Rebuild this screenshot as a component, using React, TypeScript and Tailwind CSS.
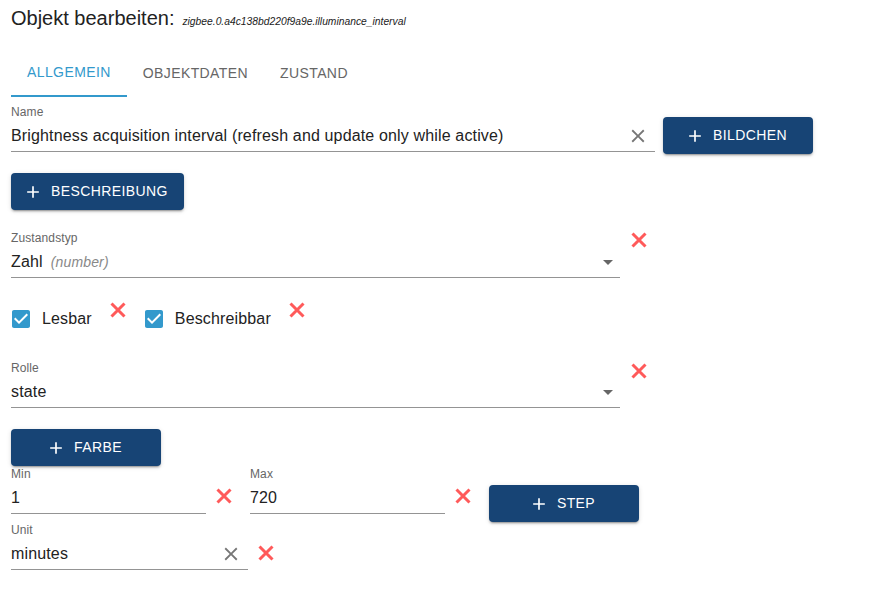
import React from 'react';

const font = "font-['Liberation_Sans',Arial,sans-serif]";

const PlusIcon = () => (
  <svg viewBox="0 0 24 24" className="w-5 h-5 -ml-1 mr-2 fill-current">
    <path d="M19 13h-6v6h-2v-6H5v-2h6V5h2v6h6v2z" />
  </svg>
);

const ClearIcon = () => (
  <svg viewBox="0 0 24 24" className="w-[22px] h-[22px] fill-[#767676]">
    <path d="M19 6.41 17.59 5 12 10.59 6.41 5 5 6.41 10.59 12 5 17.59 6.41 19 12 13.41 17.59 19 19 17.59 13.41 12z" />
  </svg>
);

const RedX: React.FC<{ className?: string }> = ({ className = '' }) => (
  <svg viewBox="0 0 16 16" className={`w-4 h-4 shrink-0 ${className}`}>
    <path d="M1.5 1.5 14.5 14.5M14.5 1.5 1.5 14.5" stroke="#ff5a5a" strokeWidth="3" />
  </svg>
);

const Checked = () => (
  <svg viewBox="0 0 24 24" className="w-6 h-6 -ml-[2px] fill-[#3399cc]">
    <path d="M19 3H5c-1.11 0-2 .9-2 2v14c0 1.1.89 2 2 2h14c1.11 0 2-.9 2-2V5c0-1.1-.89-2-2-2zm-9 14l-5-5 1.41-1.41L10 14.17l7.59-7.59L19 8l-9 9z" />
  </svg>
);

const Button: React.FC<{ label: string; className?: string }> = ({ label, className = '' }) => (
  <button
    className={`h-[37px] min-w-[150px] px-4 flex items-center justify-center rounded bg-[#174475] text-white text-[14px] uppercase tracking-[0.4px] shadow-[0_3px_1px_-2px_rgba(0,0,0,0.2),0_2px_2px_0_rgba(0,0,0,0.14),0_1px_5px_0_rgba(0,0,0,0.12)] ${className}`}
  >
    <PlusIcon />
    <span>{label}</span>
  </button>
);

const Field: React.FC<{
  label: string;
  width: string;
  children: React.ReactNode;
  clear?: boolean;
  select?: boolean;
}> = ({ label, width, children, clear, select }) => (
  <div className={`flex flex-col h-[48px] ${width}`}>
    <div className="h-[16px] pt-[1px] text-[12px] leading-[15px] tracking-[0.11px] text-[#666]">{label}</div>
    <div className="relative h-[32px] border-b border-[#949494] pt-[4px] text-[16px] leading-[23px] tracking-[0.15px] text-[#222] flex">
      <div className="flex-1 flex items-baseline">{children}</div>
      {clear && (
        <div className="absolute right-[6px] top-[5px]">
          <ClearIcon />
        </div>
      )}
      {select && (
        <div className="absolute right-[7px] top-[14px] w-0 h-0 border-l-[5px] border-r-[5px] border-t-[5px] border-l-transparent border-r-transparent border-t-[#666]" />
      )}
    </div>
  </div>
);

export default function App() {
  return (
    <div className={`min-h-screen bg-white pl-[11px] ${font}`}>
      {/* Title */}
      <div className="h-[49px] pt-[5px] flex items-baseline">
        <span className="text-[20px] leading-[26px] text-[#222]">Objekt bearbeiten:</span>
        <span className="ml-[8px] text-[10.3px] italic text-[#222]">zigbee.0.a4c138bd220f9a9e.illuminance_interval</span>
      </div>

      {/* Tabs */}
      <div className="flex h-[48px] text-[14px] uppercase tracking-[0.4px]">
        <div className="px-4 flex items-center border-b-2 border-[#3399cc] text-[#3399cc]">Allgemein</div>
        <div className="px-4 flex items-center text-[#666]">Objektdaten</div>
        <div className="px-4 flex items-center text-[#666]">Zustand</div>
      </div>

      {/* Name */}
      <div className="mt-[7px] flex items-start">
        <Field label="Name" width="w-[644px]" clear>
          Brightness acquisition interval (refresh and update only while active)
        </Field>
        <Button label="Bildchen" className="ml-[8px] mt-[13px]" />
      </div>

      <div className="mt-[19px] flex">
        <Button label="Beschreibung" />
      </div>

      {/* Zustandstyp */}
      <div className="mt-[20px] flex items-start">
        <Field label="Zustandstyp" width="w-[609px]" select>
          <span>Zahl</span>
          <span className="ml-[8px] text-[14px] italic text-[#888]">(number)</span>
        </Field>
        <RedX className="ml-[11px] mt-[2px]" />
      </div>

      {/* Checkboxes */}
      <div className="mt-[22px] flex items-start h-[38px] text-[16px] tracking-[0.15px] text-[#222]">
        <div className="h-[38px] flex items-center">
          <Checked />
          <span className="ml-[9px]">Lesbar</span>
        </div>
        <RedX className="ml-[18px] mt-[2px]" />
        <div className="ml-[18px] h-[38px] flex items-center">
          <Checked />
          <span className="ml-[9px]">Beschreibbar</span>
        </div>
        <RedX className="ml-[18px] mt-[2px]" />
      </div>

      {/* Rolle */}
      <div className="mt-[22px] flex items-start">
        <Field label="Rolle" width="w-[609px]" select>
          state
        </Field>
        <RedX className="ml-[11px] mt-[3px]" />
      </div>

      <div className="mt-[21px] flex">
        <Button label="Farbe" className="h-[36px]" />
      </div>

      {/* Min / Max */}
      <div className="flex items-start h-[56px]">
        <Field label="Min" width="w-[195px]">
          1
        </Field>
        <RedX className="ml-[10px] mt-[22px]" />
        <div className="ml-[18px]">
          <Field label="Max" width="w-[195px]">
            720
          </Field>
        </div>
        <RedX className="ml-[10px] mt-[22px]" />
        <Button label="Step" className="ml-[18px] mt-[19px]" />
      </div>

      {/* Unit */}
      <div className="flex items-start">
        <Field label="Unit" width="w-[237px]" clear>
          minutes
        </Field>
        <RedX className="ml-[10px] mt-[23px]" />
      </div>
    </div>
  );
}
